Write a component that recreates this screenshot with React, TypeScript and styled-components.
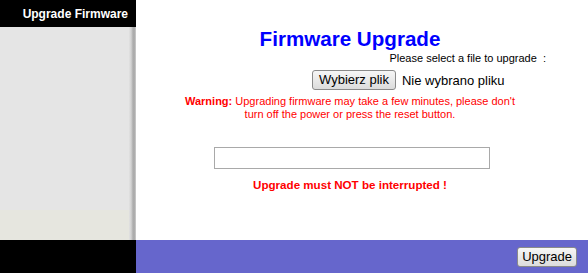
import React from "react";
import styled, { createGlobalStyle } from "styled-components";

const Global = createGlobalStyle`
  html, body { margin: 0; padding: 0; background: #fff; }
  body { font-family: Arial, "Liberation Sans", sans-serif; }
`;

const Page = styled.div`
  width: 588px;
  height: 273px;
  display: grid;
  grid-template-columns: 136px 1fr;
  grid-template-rows: 1fr 33px;
  overflow: hidden;
`;

const Side = styled.div`
  display: flex;
  flex-direction: column;
`;

const SideHeader = styled.div`
  height: 27px;
  background: #000;
  color: #fff;
  font-weight: bold;
  font-size: 12px;
  display: flex;
  align-items: center;
  justify-content: flex-end;
  padding-right: 8px;
`;

const SideBody = styled.div<{ $tone: string }>`
  flex: ${(p) => (p.$tone === "gray" ? 1 : "0 0 30px")};
  background: ${(p) => (p.$tone === "gray" ? "#e5e5e5" : "#e6e6df")};
  position: relative;
  &::after {
    content: "";
    position: absolute;
    top: 0;
    right: 0;
    bottom: 0;
    width: 7px;
    background: linear-gradient(to right, #e2e2e2, #d2d2d2 30%, #b0b0b0 55%, #a8a8a8 75%, #cfcfcf);
  }
`;

const Main = styled.div`
  padding: 27px 24px 0 0;
  display: flex;
  flex-direction: column;
  align-items: center;
`;

const Title = styled.h1`
  margin: 0;
  font-size: 20.6px;
  line-height: 23px;
  font-weight: bold;
  color: #0000ff;
`;

const LabelRow = styled.div`
  align-self: stretch;
  text-align: right;
  padding-right: 18px;
  font-size: 11px;
  line-height: 13px;
  margin-top: 2px;
  white-space: pre;
`;

const FileRow = styled.div`
  align-self: stretch;
  display: flex;
  align-items: center;
  padding-left: 176px;
  margin-top: 5px;
  gap: 6px;
  font-size: 13px;
`;

const NativeButton = styled.button<{ $pad?: number }>`
  font-family: Arial, "Liberation Sans", sans-serif;
  font-size: 13px;
  height: 20px;
  padding: 0 ${(p) => p.$pad ?? 6}px;
  border: 1px solid #8a8a8a;
  border-radius: 3px;
  background: linear-gradient(#f6f6f6, #dcdcdc);
  color: #000;
  line-height: 16px;
`;

const Warning = styled.p`
  margin: 5px 0 0;
  color: #ff0000;
  font-size: 11px;
  line-height: 13px;
  text-align: center;
  width: 340px;
`;

const Strong = styled.b`
  font-weight: bold;
`;

const Field = styled.div`
  box-sizing: border-box;
  margin: 26px 0 0 3px;
  width: 276px;
  height: 22px;
  border: 1px solid #a9a9a9;
  background: #fff;
`;

const Alert = styled.div`
  margin-top: 9px;
  color: #ff0000;
  font-weight: bold;
  font-size: 11.6px;
  line-height: 14px;
`;

const FootLeft = styled.div`
  background: #000;
`;

const FootRight = styled.div`
  background: #6666cc;
  display: flex;
  justify-content: flex-end;
  align-items: flex-start;
  padding: 7px 11px 0 0;
`;

export default function App() {
  return (
    <>
      <Global />
      <Page>
        <Side>
          <SideHeader>Upgrade Firmware</SideHeader>
          <SideBody $tone="gray" />
          <SideBody $tone="beige" />
        </Side>
        <Main>
          <Title>Firmware Upgrade</Title>
          <LabelRow>{"Please select a file to upgrade  :"}</LabelRow>
          <FileRow>
            <NativeButton type="button">Wybierz plik</NativeButton>
            <span>Nie wybrano pliku</span>
          </FileRow>
          <Warning>
            <Strong>Warning:</Strong> Upgrading firmware may take a few minutes, please don't turn off the power or press the reset button.
          </Warning>
          <Field />
          <Alert>Upgrade must NOT be interrupted !</Alert>
        </Main>
        <FootLeft />
        <FootRight>
          <NativeButton type="button" $pad={4}>Upgrade</NativeButton>
        </FootRight>
      </Page>
    </>
  );
}
